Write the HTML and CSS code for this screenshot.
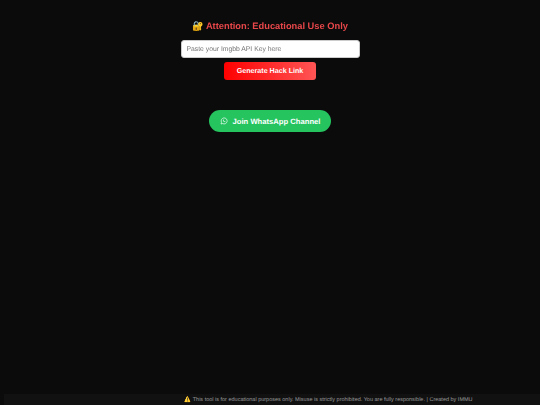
FILE: index.html
```html
<!DOCTYPE html>
<html lang="en">
<head>
    <meta charset="UTF-8">
    <meta name="viewport" content="width=device-width, initial-scale=1.0">
    <title>Attention: Educational Use Only</title>
    <link rel="stylesheet" href="styles.css">
</head>
<body>
    <main class="container">
        <h1>🔐 Attention: Educational Use Only</h1>
        <input type="text" class="key-input" placeholder="Paste your Imgbb API Key here">
        <button class="generate-btn">Generate Hack Link</button>
        <a class="whatsapp-btn" href="#">
            <svg class="wa-icon" viewBox="0 0 24 24" fill="none" stroke="currentColor" stroke-width="2">
                <path d="M3 21l1.5-5A9 9 0 1 1 8 19.6z" stroke-linejoin="round"/>
                <path d="M8.5 8.5c0 4 3 7 7 7l1-2-2.500-1-1 1c-1-.5-2-1.500-2.500-2.500l1-1-1-2.500z" fill="currentColor" stroke="none"/>
            </svg>
            Join WhatsApp Channel
        </a>
    </main>
    <footer class="footer">⚠️ This tool is for educational purposes only. Misuse is strictly prohibited. You are fully responsible. | Created by IMMU</footer>
</body>
</html>
```

FILE: styles.css
```css
* {
    box-sizing: border-box;
}

html, body {
    height: 100%;
}

body {
    margin: 0;
    background: #0b0b0b;
    font-family: "Liberation Sans", Arial, sans-serif;
    text-rendering: geometricPrecision;
    display: flex;
    flex-direction: column;
}

.container {
    flex: 1;
    display: flex;
    flex-direction: column;
    align-items: center;
    padding-top: 20px;
    will-change: opacity;
}

h1 {
    margin: 0 0 8px;
    font-size: 9.300px;
    line-height: 12px;
    color: #e8474a;
}

.key-input {
    width: 179px;
    height: 18px;
    padding: 0 5px;
    border: 1px solid #ccc;
    border-radius: 3px;
    background: #fff;
    font-family: inherit;
    font-size: 6.800px;
    text-rendering: geometricPrecision;
}

.key-input::placeholder {
    color: #757575;
}

.generate-btn {
    width: 92px;
    height: 18px;
    margin-top: 4px;
    padding: 0;
    border: none;
    border-radius: 3px;
    background: linear-gradient(90deg, #ff0000, #ff5555);
    color: #fff;
    font-family: inherit;
    font-size: 7.150px;
    font-weight: bold;
    text-rendering: geometricPrecision;
}

.whatsapp-btn {
    display: flex;
    align-items: center;
    justify-content: center;
    gap: 5px;
    width: 122px;
    height: 22px;
    margin-top: 30px;
    border-radius: 11px;
    background: #25c45f;
    color: #fff;
    font-size: 7.650px;
    font-weight: bold;
    text-decoration: none;
}

.wa-icon {
    width: 8px;
    height: 8px;
}

.footer {
    height: 11px;
    margin-left: 4px;
    padding-left: 113px;
    background: #111;
    color: #999;
    font-size: 5.500px;
    line-height: 13px;
    text-align: center;
    will-change: opacity;
}
```
